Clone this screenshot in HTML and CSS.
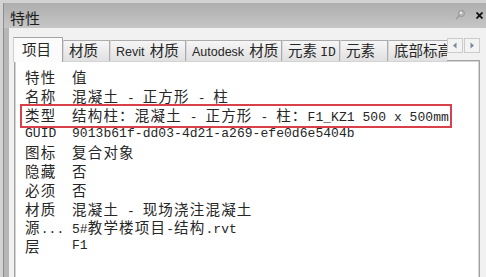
FILE: index.html
```html
<!DOCTYPE html>
<html lang="zh-cn">
<head>
    <meta charset="UTF-8">
    <meta name="viewport" content="width=device-width, initial-scale=1.0">
    <title>特性</title>
    <link rel="stylesheet" href="styles.css">
</head>
<body>
    <div class="panel">
        <div class="titlebar">
            <span class="title">特性</span>
            <span class="tools">
                <svg class="pin" width="10" height="10" viewBox="0 0 10 10">
                    <line x1="1" y1="9" x2="5" y2="5" stroke="#9a9a9a" stroke-width="1.2"/>
                    <circle cx="6.5" cy="3.5" r="3" fill="#b8b8b8" stroke="#8c8c8c" stroke-width="0.8"/>
                    <circle cx="5.8" cy="2.8" r="1.1" fill="#f4f4f4"/>
                </svg>
                <svg class="close" width="7" height="7" viewBox="0 0 7 7">
                    <path d="M0.5 0.5 L6.5 6.5 M6.5 0.5 L0.5 6.5" stroke="#111" stroke-width="1.8"/>
                </svg>
            </span>
        </div>
        <div class="body">
            <div class="tabs">
                <div class="tab active">项目</div>
                <div class="tab">材质</div>
                <div class="tab"><span class="sans">Revit</span> 材质</div>
                <div class="tab"><span class="sans">Autodesk</span> 材质</div>
                <div class="tab">元素 <span class="en">ID</span></div>
                <div class="tab">元素</div>
                <div class="tab last">底部标高</div>
                <div class="arrows">
                    <span class="arrow">
                        <svg width="6" height="7" viewBox="0 0 6 7"><polygon points="4.5,0.5 4.5,6.5 1,3.5" fill="#7d8796"/></svg>
                    </span>
                    <span class="arrow">
                        <svg width="6" height="7" viewBox="0 0 6 7"><polygon points="1.5,0.5 1.5,6.5 5,3.5" fill="#7d8796"/></svg>
                    </span>
                </div>
            </div>

            <div class="sheet">
                <div class="row head"><span class="key">特性</span><span class="val">值</span></div>
                <div class="row"><span class="key">名称</span><span class="val">混凝土<span class="en"> - </span>正方形<span class="en"> - </span>柱</span></div>
                <div class="row marked"><span class="key">类型</span><span class="val">结构柱：混凝土<span class="en"> - </span>正方形<span class="en"> - </span>柱：<span class="en">F1_KZ1 500 x 500mm</span></span></div>
                <div class="row"><span class="key en">GUID</span><span class="val en">9013b61f-dd03-4d21-a269-efe0d6e5404b</span></div>
                <div class="row"><span class="key">图标</span><span class="val">复合对象</span></div>
                <div class="row"><span class="key">隐藏</span><span class="val">否</span></div>
                <div class="row"><span class="key">必须</span><span class="val">否</span></div>
                <div class="row"><span class="key">材质</span><span class="val">混凝土<span class="en"> - </span>现场浇注混凝土</span></div>
                <div class="row"><span class="key">源<span class="en">...</span></span><span class="val"><span class="en">5#</span>教学楼项目<span class="en">-</span>结构<span class="en">.rvt</span></span></div>
                <div class="row"><span class="key">层</span><span class="val en">F1</span></div>
            </div>
        </div>
    </div>
</body>
</html>
```

FILE: styles.css
```css
html, body {
    margin: 0;
    width: 486px;
    height: 277px;
    overflow: hidden;
}
body {
    background: #d2d2d2;
    font-family: "Noto Sans CJK SC", sans-serif;
    color: #262626;
}
.panel {
    margin: 3px 0 0 3px;
    height: 274px;
    border-left: 1px solid #8e8e8e;
    display: flex;
    flex-direction: column;
}
.titlebar {
    height: 25px;
    display: flex;
    align-items: center;
    padding: 0 3px 0 6px;
    background: linear-gradient(#aeaeae, #c6c6c6);
}
.title {
    font-size: 15px;
    line-height: 20px;
    padding-top: 5px;
    color: #1c1c1c;
}
.tools {
    margin-left: auto;
    display: flex;
    align-items: center;
    gap: 11px;
}
.pin {
    margin-top: -2px;
}
.body {
    flex: 1;
    background: #f1f1f1;
    border-left: 5px solid #b6b6b6;
    padding: 9px 0 0 4px;
}
.tabs {
    display: grid;
    grid-template-columns: 50px 47px 76px 96px 58px 48px 59px 34px;
    height: 24px;
    align-items: end;
    position: relative;
    z-index: 1;
}
.tab {
    box-sizing: border-box;
    height: 21px;
    border: 1px solid #acacac;
    border-bottom: none;
    border-left-color: #d8d8d8;
    background: linear-gradient(#f6f6f6, #e0e0e0);
    padding-left: 5px;
    font-size: 14.5px;
    line-height: 18px;
    white-space: nowrap;
    overflow: hidden;
}
.tab.active {
    height: 25px;
    margin-bottom: -1px;
    padding: 2px 0 0 8px;
    background: #fbfbfb;
    border-color: #a4a4a4;
    border-left-color: #cfcfcf;
}
.tab.last {
    border-right: none;
}
.sans {
    font-family: "Liberation Sans", sans-serif;
    font-size: 12.5px;
    margin-right: 2px;
}
.arrows {
    align-self: start;
    margin-top: 1px;
    display: flex;
    gap: 1px;
    height: 15px;
}
.arrow {
    box-sizing: border-box;
    width: 16px;
    height: 15px;
    border: 1px solid #cbcbcb;
    background: #f3f3f3;
    display: flex;
    align-items: center;
    justify-content: center;
}
.sheet {
    flex: 1;
    margin: -1px 0 0 1px;
    width: 466px;
    height: 220px;
    box-sizing: border-box;
    background: #fff;
    border: 1px solid #a2a2a2;
    box-shadow: inset 0 0 0 1px #d4d4d4;
    padding: 6px 0 0 10px;
}
.row {
    display: grid;
    grid-template-columns: 47px 1fr;
    height: 18.75px;
    line-height: 18.75px;
    font-size: 14.5px;
    letter-spacing: 1.2px;
    white-space: nowrap;
}
.row.head {
    height: 20px;
    line-height: 20px;
}
.en {
    font-family: "Liberation Mono", monospace;
    font-size: 13px;
    letter-spacing: 0.05px;
}
.tab .en {
    letter-spacing: 0;
}
.marked {
    position: relative;
}
.marked::after {
    content: "";
    position: absolute;
    left: -5px;
    right: 27px;
    top: -2px;
    bottom: -3px;
    border: 2px solid #d9404a;
}
```
